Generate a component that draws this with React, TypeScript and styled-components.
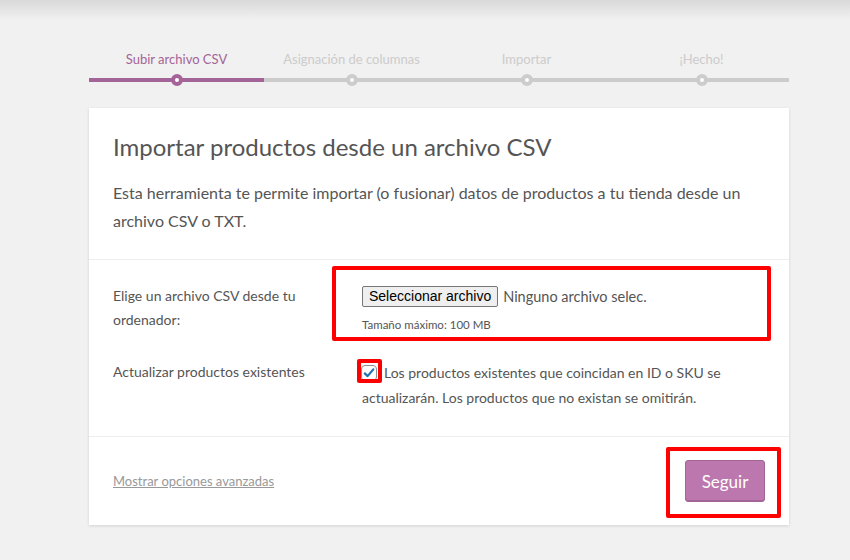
import React from 'react';
import styled, { createGlobalStyle } from 'styled-components';

const FONT = `Lato, "Noto Sans", "Liberation Sans", sans-serif`;

const Global = createGlobalStyle`
  html, body { margin: 0; padding: 0; }
  body {
    background-color: #f1f1f1;
    background-image: linear-gradient(#d9d9d9, #f1f1f1 20px);
    background-repeat: no-repeat;
    background-size: 100% 20px;
    font-family: ${FONT};
    color: #555;
    min-height: 560px;
  }
`;

const Page = styled.div`
  padding: 49px 0 0 89px;
  width: 700px;
`;

const Steps = styled.ol`
  display: flex;
  list-style: none;
  margin: 0;
  padding: 0;
`;

const Step = styled.li<{ $active?: boolean }>`
  flex: 1;
  position: relative;
  text-align: center;
  font-size: 13px;
  line-height: 20px;
  padding-bottom: 9px;
  color: ${p => (p.$active ? '#a46497' : '#ccc')};
  border-bottom: 4px solid ${p => (p.$active ? '#a46497' : '#ccc')};
  &::before {
    content: '';
    position: absolute;
    left: calc(50% - 6px);
    bottom: -8px;
    width: 4px;
    height: 4px;
    border-radius: 50%;
    background: #fff;
    border: 4px solid ${p => (p.$active ? '#a46497' : '#ccc')};
  }
`;

const Card = styled.div`
  margin-top: 26px;
  background: #fff;
  box-shadow: 0 1px 3px rgba(0, 0, 0, 0.13);
`;

const Header = styled.header`
  padding: 24px;
`;

const Title = styled.h1`
  margin: 0 0 18px;
  font-size: 24px;
  line-height: 29px;
  font-weight: 400;
  color: #555;
`;

const Intro = styled.p`
  margin: 0;
  font-size: 16px;
  line-height: 28px;
`;

const Form = styled.section`
  border-top: 1px solid #eee;
  padding: 24px 24px 26px;
  display: grid;
  grid-template-columns: 225px 1fr;
  column-gap: 24px;
  row-gap: 26px;
`;

const Label = styled.div`
  font-size: 14px;
  line-height: 24px;
`;

const Field = styled.div`
  position: relative;
  font-size: 14px;
  line-height: 25px;
`;

const FileLine = styled.div`
  display: flex;
  align-items: center;
  gap: 5px;
  height: 24px;
`;

const FileButton = styled.button`
  font-family: "Liberation Sans", Arial, sans-serif;
  font-size: 14px;
  height: 21px;
  line-height: 17px;
  padding: 1px 6px;
  background: #efefef;
  border: 1px solid #767676;
  border-radius: 2px;
  color: #000;
`;

const FileName = styled.span`
  font-size: 14.5px;
  color: #555;
`;

const Hint = styled.div`
  margin-top: 8px;
  font-size: 11.5px;
  line-height: 18px;
`;

const CheckLabel = styled.label`
  display: block;
`;

const Check = styled.span`
  display: inline-block;
  box-sizing: border-box;
  width: 16px;
  height: 16px;
  margin: 0 7px 0 -1px;
  vertical-align: -3px;
  border: 1px solid #8c8f94;
  border-radius: 4px;
  background: #fff;
  position: relative;
`;

const CheckMark = styled.svg`
  position: absolute;
  left: 0;
  top: 0;
  display: block;
`;

const Footer = styled.footer`
  border-top: 1px solid #eee;
  padding: 23px 24px;
  display: flex;
  justify-content: space-between;
  align-items: center;
`;

const AdvancedLink = styled.a`
  font-size: 13px;
  color: #999;
  text-decoration: underline;
  cursor: pointer;
`;

const ButtonWrap = styled.div`
  position: relative;
`;

const Primary = styled.button`
  width: 80px;
  height: 42px;
  background: #bb77ae;
  border: 1px solid #a36597;
  border-radius: 3px;
  box-shadow: inset 0 -1px 0 #a36597;
  color: #fff;
  font-family: ${FONT};
  font-size: 17px;
  cursor: pointer;
`;

const Highlight = styled.span<{ $top: number; $left: number; $w: number; $h: number }>`
  position: absolute;
  top: ${p => p.$top}px;
  left: ${p => p.$left}px;
  width: ${p => p.$w}px;
  height: ${p => p.$h}px;
  box-sizing: border-box;
  border: 4px solid #ff0000;
  border-radius: 2px;
  pointer-events: none;
`;

export default function App() {
  return (
    <>
      <Global />
      <Page>
        <Steps>
          <Step $active>Subir archivo CSV</Step>
          <Step>Asignación de columnas</Step>
          <Step>Importar</Step>
          <Step>¡Hecho!</Step>
        </Steps>
        <Card>
          <Header>
            <Title>Importar productos desde un archivo CSV</Title>
            <Intro>
              Esta herramienta te permite importar (o fusionar) datos de productos a tu tienda desde un archivo CSV o TXT.
            </Intro>
          </Header>
          <Form>
            <Label>Elige un archivo CSV desde tu ordenador:</Label>
            <Field>
              <FileLine>
                <FileButton type="button">Seleccionar archivo</FileButton>
                <FileName>Ninguno archivo selec.</FileName>
              </FileLine>
              <Hint>Tamaño máximo: 100 MB</Hint>
              <Highlight $top={-18} $left={-30} $w={439} $h={75} />
            </Field>
            <Label>Actualizar productos existentes</Label>
            <Field>
              <CheckLabel>
                <Check>
                  <CheckMark width="14" height="14" viewBox="0 0 14 14">
                    <path d="M2.8 7.4 L5.6 10.1 L11.3 3.4" fill="none" stroke="#2271b1" strokeWidth="2.2" strokeLinecap="round" strokeLinejoin="round" />
                  </CheckMark>
                  <Highlight $top={-7} $left={-5} $w={25} $h={24} />
                </Check>
                Los productos existentes que coincidan en ID o SKU se actualizarán. Los productos que no existan se omitirán.
              </CheckLabel>
            </Field>
          </Form>
          <Footer>
            <AdvancedLink>Mostrar opciones avanzadas</AdvancedLink>
            <ButtonWrap>
              <Primary type="button">Seguir</Primary>
              <Highlight $top={-13} $left={-19} $w={115} $h={71} />
            </ButtonWrap>
          </Footer>
        </Card>
      </Page>
    </>
  );
}
